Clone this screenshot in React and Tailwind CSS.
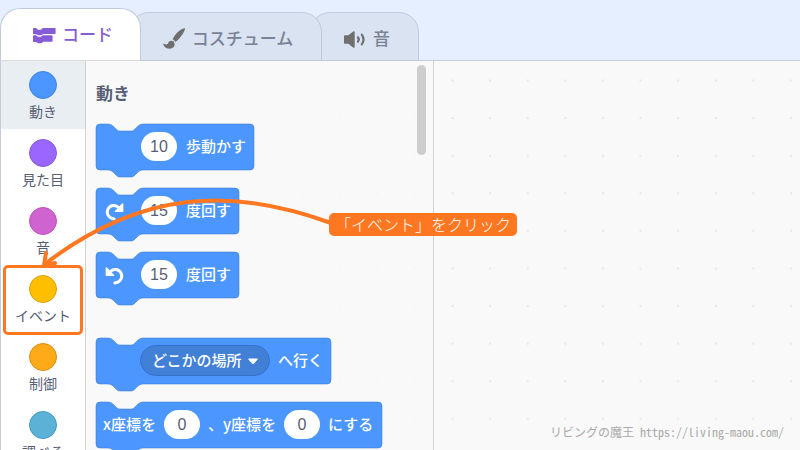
import React, { useState } from 'react';
import clsx from 'clsx';

const CATEGORIES = [
    { name: '動き', color: 'bg-[#4c97ff] border-[#3b84ea]' },
    { name: '見た目', color: 'bg-[#9966ff] border-[#855cd6]' },
    { name: '音', color: 'bg-[#cf63cf] border-[#bd52bd]' },
    { name: 'イベント', color: 'bg-[#ffbf00] border-[#dba302]' },
    { name: '制御', color: 'bg-[#ffab19] border-[#db8c12]' },
    { name: '調べる', color: 'bg-[#5cb1d6] border-[#429cc2]' },
];

const CodeIcon = () => (
    <svg className="w-6 h-[18px]" viewBox="0 0 24 18" fill="#855cd6" aria-hidden="true">
        <path d="M1.600 2H4l2 1.800h3L10.800 2H23q.6 0 .6.600v4.700q0 .7-.7.7H11.200L9.400 9.200H6L4.200 8.300H1.600q-.6 0-.6-.7V2.600Q1 2 1.600 2z" />
        <path d="M1.600 9.300H4l2 1.500h3l1.800-1.500h9.100q.7 0 .7.7v5q0 .7-.7.7h-8.700L9.600 17.300H6L4.200 15.900H1.600q-.6 0-.6-.7v-5q0-.9.6-.9z" />
    </svg>
);

const BrushIcon = () => (
    <svg className="w-6 h-6" viewBox="0 0 24 24" fill="#6f6f6f" aria-hidden="true">
        <path d="M22.800 1.300C20.800.6 15 4.800 12.300 9.300c-.6 1-1.300 2-1.700 3.100 1.200.3 2.300 1.200 2.700 2.500 1.500-.8 2.600-1.700 3.600-2.900C20.300 8.300 24 2.300 22.800 1.300z" />
        <path d="M9.600 13.700c-2-.1-3.200 1-3.500 2.600-.4 1.400-2.400 1.500-4.800.2-.2 2.400 2.600 5.300 6.400 5.200 3.200-.1 5.200-2.300 4.900-5-.2-1.800-1.300-2.900-3-3z" />
    </svg>
);

const SoundIcon = () => (
    <svg className="w-6 h-5" viewBox="0 0 24 20" aria-hidden="true">
        <path d="M2 6.200h3.400l4.700-3.700q1.600-1 1.600.8v14.400q0 1.800-1.600.8l-4.700-3.700H2q-1-.1-1-1V7.200q0-1 1-1z" fill="#6f6f6f" />
        <path d="M14.900 8.300q1.800 2.200 0 4.400M18.800 5.600q3.400 4.900 0 9.800" fill="none" stroke="#6f6f6f" strokeWidth="2.200" strokeLinecap="round" />
    </svg>
);

const TABS = [
    { name: 'コード', icon: CodeIcon, box: 'w-[141px] h-[53px] z-30 gap-1.5 pl-1' },
    { name: 'コスチューム', icon: BrushIcon, box: 'w-[193px] h-[49px] z-20 -ml-3 gap-1.5 pt-1 pl-1' },
    { name: '音', icon: SoundIcon, box: 'w-[109px] h-[49px] z-10 -ml-3 gap-1.5 pt-1 pl-1' },
];

// Counter-clockwise is the same glyph mirrored
const TurnIcon = ({ flip }) => (
    <svg className="w-6 h-6 shrink-0" viewBox="0 0 24 24" aria-hidden="true">
        <g transform={flip ? 'translate(23 0) scale(-1 1)' : undefined}>
            <path d="M11.200 20C6 19.600 3.200 14.800 4.700 10.800 6.600 6 12.600 5 16 9" fill="none" stroke="white" strokeWidth="3" strokeLinecap="round" />
            <path d="M20.400 5v7.200q0 .8-.8.8h-7.200q-1.200-.2-.5-1.100l7.100-7.300q1.100-.7 1.400.4z" fill="white" />
        </g>
    </svg>
);

function Block({ width, className, children }) {
    const path = `M0 4Q0 0 4 0H12Q15 0 17 2L21 6Q22 7 24 7H35Q37 7 38 6L42 2Q44 0 47 0H${width - 4}Q${width} 0 ${width} 4V42Q${width} 46 ${width - 4} 46H47Q44 46 42 48L38 52Q37 53 35 53H24Q22 53 21 52L17 48Q15 46 12 46H4Q0 46 0 42Z`;
    return (
        <div className={clsx('relative w-fit', className)}>
            <svg className="block h-[46px] overflow-visible" width={width} height="46" aria-hidden="true">
                <path d={path} fill="#4c97ff" stroke="#3373cc" strokeOpacity="0.5" />
            </svg>
            <div className="absolute inset-0 flex items-center pl-[7px] pb-px text-[15px] font-medium text-white whitespace-nowrap font-['Noto_Sans_CJK_JP',sans-serif]">{children}</div>
        </div>
    );
}

function NumberField({ label, initial }) {
    const [value, setValue] = useState(initial);
    return (
        <input type="text" aria-label={label} value={value} onChange={e => setValue(e.target.value)}
            className="w-9 h-[29px] shrink-0 rounded-full bg-white text-center text-base font-normal text-[#575e75] font-['Liberation_Sans',sans-serif] outline-none" />
    );
}

function TabBar({ active, onSelect }) {
    return (
        <header className="flex items-end h-[61px] shrink-0 bg-[#e5efff] border-b border-[#c3cddd]">
            <div role="tablist" className="flex items-end -mb-px">
                {TABS.map(({ name, icon: Icon, box }) => (
                    <button key={name} role="tab" aria-selected={active === name} onClick={() => onSelect(name)}
                        className={clsx('relative flex items-center justify-center rounded-t-[20px] border border-[#c0cadb] text-[17px] font-medium cursor-pointer', box,
                            active === name ? 'bg-white text-[#855cd6] border-b-[#d9d9d9]' : 'bg-[#d9e3f2] text-[#7b8296]')}>
                        <Icon />{name}
                    </button>
                ))}
            </div>
        </header>
    );
}

function CategoryMenu({ active, onSelect }) {
    return (
        <nav className="w-[85px] shrink-0 bg-white border-l border-[#c3cddd]">
            {CATEGORIES.map(({ name, color }) => (
                <button key={name} onClick={() => onSelect(name)}
                    className={clsx('relative flex flex-col items-center w-full h-[68px] pt-[10px] gap-[3px] text-sm leading-5 text-[#575e75] cursor-pointer', active === name && 'bg-[#e9eef2]')}>
                    <span className={clsx('w-7 h-7 rounded-full border', color)} />
                    {name}
                    {name === 'イベント' && <span className="absolute -bottom-0.5 top-0 inset-x-0.5 border-3 border-[#ff7720] rounded-[5px]" />}
                </button>
            ))}
        </nav>
    );
}

function Palette() {
    return (
        <section className="relative w-[349px] shrink-0 pl-[10px] pt-5 bg-[#f9f9f9]/80 border-x border-[#d0d0d0] overflow-hidden">
            <h2 className="mb-[17px] text-[17px] leading-[26px] font-bold text-[#575e75]">動き</h2>
            <Block width={158} className="mb-[18px]">
                <span className="w-[38px]" />
                <NumberField label="歩数" initial="10" />
                <span className="ml-[9px]">歩動かす</span>
            </Block>
            <Block width={143} className="mb-[18px]">
                <TurnIcon />
                <span className="w-[14px]" />
                <NumberField label="時計回りの角度" initial="15" />
                <span className="ml-[9px]">度回す</span>
            </Block>
            <Block width={143} className="mb-10">
                <TurnIcon flip />
                <span className="w-[14px]" />
                <NumberField label="反時計回りの角度" initial="15" />
                <span className="ml-[9px]">度回す</span>
            </Block>
            <Block width={235} className="mb-[18px]">
                <span className="w-[37px]" />
                <span className="relative">
                    <select aria-label="行き先" className="block w-[130px] h-[31px] pl-[11px] appearance-none rounded-full bg-[#4280d7] border border-[#3373cc] font-medium text-white outline-none">
                        <option>どこかの場所</option>
                        <option>マウスのポインター</option>
                    </select>
                    <svg className="absolute right-3 top-3 w-[10px] h-2 pointer-events-none" viewBox="0 0 10 8" aria-hidden="true">
                        <path d="M1 1.500h8q1 .3.400 1.300L6 6.500q-1 .8-2 0L.6 2.800Q0 1.800 1 1.500z" fill="white" />
                    </svg>
                </span>
                <span className="ml-2">へ行く</span>
            </Block>
            <Block width={286} className="mb-[18px]">
                <span className="mr-2">x座標を</span>
                <NumberField label="x座標" initial="0" />
                <span className="mx-2">、y座標を</span>
                <NumberField label="y座標" initial="0" />
                <span className="ml-2">にする</span>
            </Block>
            <div className="absolute right-[7px] top-1 w-[9px] h-[90px] rounded-full bg-[#cecdce]" />
        </section>
    );
}

// Dot grid of the workspace, it also shines through the palette
function DotGrid() {
    return (
        <svg className="absolute inset-0 w-full h-full" aria-hidden="true">
            <defs>
                <pattern id="dots" x="0.300" y="0.600" width="37.600" height="37.600" patternUnits="userSpaceOnUse">
                    <circle cx="1.100" cy="19" r="1.100" fill="#e6e6e6" />
                </pattern>
            </defs>
            <rect width="100%" height="100%" fill="url(#dots)" />
        </svg>
    );
}

export default function App() {
    const [tab, setTab] = useState('コード');
    const [category, setCategory] = useState('動き');

    return (
        <div className="relative flex flex-col h-screen overflow-hidden bg-[#f9f9f9] font-['Noto_Sans','Noto_Sans_CJK_JP',sans-serif]">
            <TabBar active={tab} onSelect={setTab} />
            <div className="relative flex flex-1 min-h-0">
                <DotGrid />
                <div className="relative flex">
                    <CategoryMenu active={category} onSelect={setCategory} />
                    <Palette />
                </div>
                <main className="relative flex flex-1 items-end justify-end pr-4 pb-[9px]">
                    <p className="flex items-center gap-1.5 text-xs leading-[18px] text-[#a9a9a9] font-['Noto_Sans_Mono_CJK_JP','Noto_Sans_CJK_JP',monospace]">
                        リビングの魔王 <span>https://living-maou.com/</span>
                    </p>
                </main>
            </div>

            {/* Callout */}
            <svg className="absolute left-0 top-0 z-40 w-[340px] h-[280px] pointer-events-none" viewBox="0 0 340 280" fill="none" stroke="#ff7720" strokeWidth="4" strokeLinecap="round" strokeLinejoin="round" aria-hidden="true">
                <path d="M331 223C230 186 140 191 45 264" />
                <path d="M46 253L44 265L55 263" />
            </svg>
            <div className="absolute left-[329px] top-[213px] z-40 px-1.5 rounded-[5px] bg-[#ff7720] text-base leading-[23px] font-light text-white whitespace-nowrap font-['Noto_Sans_CJK_JP',sans-serif]">「イベント」をクリック</div>
        </div>
    );
}
